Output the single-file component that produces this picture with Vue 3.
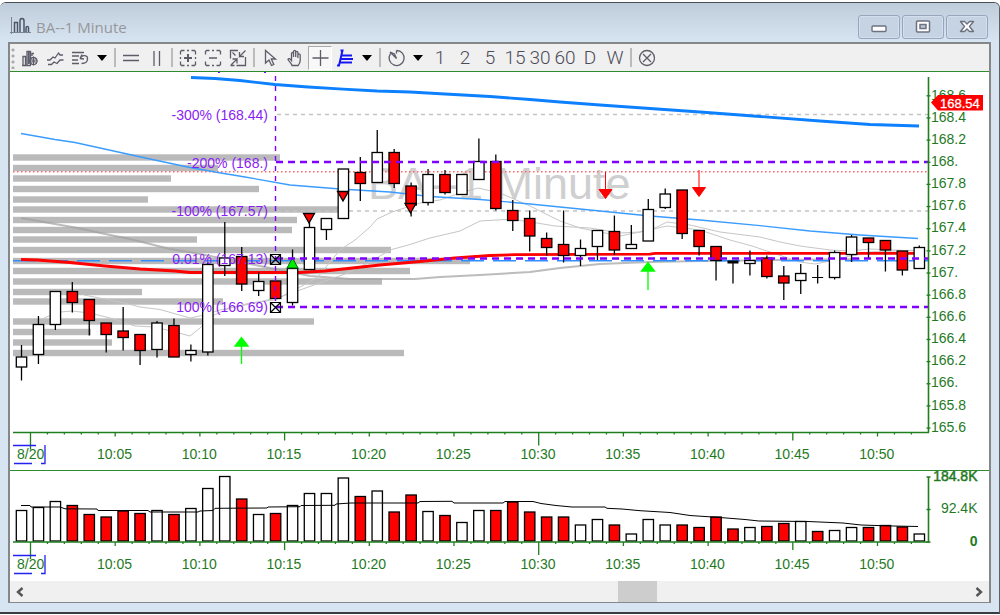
<script setup>
import { ref } from 'vue'

const STEP = 16.94
const cx = (i) => 21.5 + STEP * i

// body top, body bottom, high, low, falling
const candles = [
  [357, 367, 345, 380.5, 0], [324.5, 354.5, 316, 364, 0], [291.5, 324.5, 291.5, 330, 0], [291.5, 302.5, 282, 312.5, 1],
  [299.5, 320.5, 299.5, 335.5, 1], [323, 334.5, 323, 352.5, 1], [331, 337.5, 307, 350.5, 1], [334.5, 350.5, 334.5, 365, 1],
  [323, 349.5, 321, 357.5, 0], [325.5, 357, 318.5, 357, 1], [350.5, 354.5, 344.5, 361.5, 0], [264.5, 352, 262.5, 355.5, 0],
  [258, 265.5, 222, 276, 0], [256.5, 284, 247, 291, 1], [281.5, 290.5, 272.5, 296, 0], [281, 298.5, 281, 298.5, 1],
  [268.5, 302.5, 249.5, 305.5, 0], [227.5, 269.5, 222, 269.5, 0], [218.5, 229.5, 218.5, 240, 0], [169, 218.5, 169, 218.5, 0],
  [172.5, 183.5, 157, 201, 1], [152.5, 182.5, 130, 182.5, 0], [152.5, 183.5, 149, 188, 1], [186, 205, 182.5, 216.5, 1],
  [174.5, 202.5, 169, 205.5, 0], [174.5, 192.5, 170, 194.5, 1], [174.5, 194.5, 174.5, 194.5, 0], [161.5, 179.5, 138.5, 179.5, 0],
  [161.5, 208.5, 154.5, 210.5, 1], [210.5, 220.5, 200, 231, 1], [218.5, 236, 210.5, 251.5, 1], [238.5, 247.5, 232.5, 255.5, 1],
  [244.5, 255.5, 210.5, 262.5, 1], [248.5, 255.5, 239.5, 266, 0], [230.5, 246.5, 230.5, 260, 0], [231.5, 250, 215.5, 255, 1],
  [244.5, 248.5, 225, 248.5, 0], [209.5, 241, 199, 241, 0], [194, 207.5, 188.5, 209, 0], [190, 233.5, 190, 239, 1],
  [230.5, 246.5, 230.5, 255.5, 1], [246.5, 260.5, 246.5, 280.5, 1], [262, 262.5, 262, 283.5, 0], [260.5, 263.5, 250.5, 275.5, 0],
  [258, 276.5, 255.5, 278.5, 1], [276, 283, 266, 300, 1], [273.5, 280.5, 264, 294, 0], [277.5, 277.5, 265, 283.5, 0],
  [252.5, 277.5, 250.5, 279.5, 0], [237, 254.5, 235, 262, 0], [238, 242.5, 238, 258.5, 1], [240.5, 250, 240.5, 271.5, 1],
  [251, 270, 251, 275.5, 1], [247.5, 268.5, 245.5, 268.5, 0]
]

// bar top, falling
const volumes = [
  [510.5, 0], [507.5, 0], [501.5, 0], [505.5, 1], [514.5, 1], [517, 1], [511, 1], [513.5, 1], [510.5, 0], [514.5, 1], [508.5, 0],
  [488.5, 0], [476.5, 0], [499, 1], [514.5, 0], [513.5, 1], [505.5, 0], [493.5, 0], [493.5, 0], [478, 0], [496.5, 1],
  [491, 0], [512, 1], [495, 1], [511.5, 0], [515.5, 1], [522.5, 0], [510.5, 0], [510.5, 1], [502, 1], [512, 1],
  [517, 1], [517, 1], [525, 0], [519.5, 0], [525, 1], [534, 0], [519.5, 0], [525, 0], [525, 1], [527.5, 1],
  [517, 1], [529, 1], [527.5, 0], [526.5, 1], [523.5, 1], [521.5, 0], [531.5, 1], [530.5, 0], [527.5, 0], [527.5, 1],
  [525.5, 1], [527, 1], [534, 0]
]

// centre y, right end
const profile = [
  [157.5, 280], [168, 218], [178.5, 171], [189, 259], [199.5, 148], [209.5, 338], [220, 297], [230, 292], [239.5, 197],
  [250, 391], [261, 470], [271, 410], [281.5, 382], [292, 142], [301.5, 223], [321.5, 314], [332, 91], [342.5, 112], [353, 404]
]

const fibs = [
  ['-300% (168.44)', 119.5], ['-200% (168.)', 167.5], ['-100% (167.57)', 215.5], ['0.01% (167.13)', 263.5], ['100% (166.69)', 312]
]

const prices = ['168.6', '168.4', '168.2', '168.', '167.8', '167.6', '167.4', '167.2', '167.', '166.8', '166.6', '166.4', '166.2', '166.', '165.8', '165.6']
const priceY = (i) => 95.8 + 22.15 * i

const times = ['10:05', '10:10', '10:15', '10:20', '10:25', '10:30', '10:35', '10:40', '10:45', '10:50']
const ticks = Array.from({ length: 53 }, (_, i) => {
  const len = i === 0 ? 17 : i % 30 === 0 ? 13 : i % 15 === 0 ? 8 : i % 5 === 0 ? 4 : 2
  return { x: 30.5 + STEP * i, len }
})
const axes = { price: 432.5, volume: 542 }

const soldArrows = [[605.5, 172, 199], [699, 170, 197]]
const boughtArrows = [[241.5, 337, 364], [648, 262, 290]]
const downMarks = [[309, 213.5], [343, 191.5], [410.5, 203.5]]

const intervals = ['1', '2', '5', '15', '30', '60', 'D', 'W']
const scroll = ref(653)
</script>

<template>
  <main class="window">
    <header class="titlebar">
      <svg class="app-icon" width="21" height="18" viewBox="0 0 21 18" fill="none" stroke="#4d5566">
        <path d="M1.500 0v17M0 15.500h21" stroke="#7b8494" />
        <path d="M4.500 15V5.500h3V15M10 15V4q0-2.500 2-2.500T14 4v11M16 15v-4q0-1.500 1.300-1.500T18.500 11v4" stroke-width="1.500" />
      </svg>
      <h1>BA--1 Minute</h1>
      <div class="caption-buttons">
        <button type="button" aria-label="Minimize">
          <svg width="16" height="14" viewBox="0 0 16 14"><rect x="1" y="6" width="14" height="5.500" rx="1" fill="#fff" stroke="#6d7280" stroke-width="1.400" /></svg>
        </button>
        <button type="button" aria-label="Maximize">
          <svg width="16" height="14" viewBox="0 0 16 14"><rect x="1.500" y="1" width="13" height="11" rx="1" fill="#fff" stroke="#6d7280" stroke-width="1.500" /><rect x="5" y="4.500" width="6" height="4" fill="#b8c6d8" stroke="#6d7280" stroke-width="1.500" /></svg>
        </button>
        <button type="button" aria-label="Close">
          <svg width="16" height="14" viewBox="0 0 16 14"><path d="M1.500 1.500h4L8 4l2.500-2.500h4L10.500 6.500l4 5h-4L8 9l-2.500 2.500h-4l4-5z" fill="#fff" stroke="#6d7280" stroke-width="1.400" stroke-linejoin="round" /></svg>
        </button>
      </div>
    </header>

    <section class="client">
      <nav class="toolbar" aria-label="Chart tools">
        <span class="grip"></span>
        <button type="button" aria-label="Chart style">
          <svg viewBox="0 0 20 20"><path d="M3 17V8.500h2.500V17M7 17V3.500h3.500V17M12 8V5.500h2M2 17.500h9" /><path d="M8.800 4v12" stroke-width="2" /><circle cx="13.500" cy="13" r="3.500" /><path d="M13.500 8.500v9M9.500 13h8M10.500 10l6 6M16.500 10l-6 6" stroke-width="1" /></svg>
        </button>
        <button type="button" aria-label="Indicators">
          <svg viewBox="0 0 20 20"><path d="M2 12h3l3-3 2 1 3.500-5 1.500 2h3M3 16.500h3.500l2.500-2.500 3 1.500 3-3.500h3.500" /></svg>
        </button>
        <button type="button" aria-label="Studies">
          <svg viewBox="0 0 20 20"><path d="M2 4.500h12M2 8h7M2 12h6M2 15.500h7M10 10.500l2-4M10 10.500l4 .5M11 9.500c1-3 7-2.500 6.500 1.500 0 3.500-3 4.500-6 4.500" /></svg>
        </button>
        <button type="button" class="caret" aria-label="More studies"></button>
        <span class="sep"></span>
        <button type="button" aria-label="Horizontal line"><svg viewBox="0 0 20 20"><path d="M2 7.500h16M2 12.500h16" /></svg></button>
        <button type="button" aria-label="Vertical lines"><svg viewBox="0 0 20 20"><path d="M8 3v15M13.500 3v15" /></svg></button>
        <span class="sep"></span>
        <button type="button" aria-label="Expand">
          <svg viewBox="0 0 20 20"><path d="M6.500 2.500h-3l-1 1v3M13.500 2.500h3l1 1v3M6.500 17.500h-3l-1-1v-3M13.500 17.500h3l1-1v-3M9 2.500h2M9 17.500h2M2.500 9v2M17.500 9v2" /><path d="M10 6v8M6 10h8" stroke-width="2" /></svg>
        </button>
        <button type="button" aria-label="Shrink">
          <svg viewBox="0 0 20 20"><path d="M6.500 2.500h-3l-1 1v3M13.500 2.500h3l1 1v3M6.500 17.500h-3l-1-1v-3M13.500 17.500h3l1-1v-3M9 2.500h2M9 17.500h2M6 10h8" /></svg>
        </button>
        <button type="button" aria-label="Fit">
          <svg viewBox="0 0 20 20"><path d="M10 2.500H2.500v8M17.500 9v8.500H8.500M2.500 17.500h4M17.500 2.500l-6 6V4M11.500 8.500h4.500M3 17l6-6v4.500M9 11H4.500M4.500 4.500l3 3" /></svg>
        </button>
        <span class="sep"></span>
        <button type="button" aria-label="Pointer"><svg viewBox="0 0 20 20"><path d="M5.500 2.500v12.500l3.500-3 2.500 5.500 2.300-1-2.500-5.500h4.200z" /></svg></button>
        <button type="button" aria-label="Pan">
          <svg viewBox="0 0 20 20"><path d="M7 17.500c-1-2.500-3-4-4-6 .5-1.500 2-1 3.500 1V5.500c.3-1.500 1.700-1.500 2 0V9 3.500c.3-1.500 1.900-1.500 2.200 0V9 4.500c.3-1.500 1.900-1.500 2.200 0V10 7c.3-1.500 2-1.500 2.300 0v5.500c0 2-1 3.500-2 5z" /></svg>
        </button>
        <button type="button" class="pressed" aria-label="Crosshair" aria-pressed="true"><svg viewBox="0 0 20 20"><path d="M10.500 2v16M2.500 10h16" /></svg></button>
        <button type="button" aria-label="Fibonacci retracement">
          <svg class="blue" viewBox="0 0 20 20"><path d="M2 17.500h2L7.500 2.500h-2M6 7.500h11M5 11h13M4 14.500h13" /></svg>
        </button>
        <button type="button" class="caret" aria-label="More drawing tools"></button>
        <span class="sep"></span>
        <button type="button" aria-label="Time interval">
          <svg viewBox="0 0 20 20"><path d="M10.500 2.500a7.500 7.500 0 1 1-6 3.200M10.500 2.500v3M4 4l6.500 6.500L8.500 6z" /></svg>
        </button>
        <button type="button" class="caret" aria-label="More intervals"></button>
        <button v-for="n in intervals" :key="n" type="button" class="interval">{{ n }}</button>
        <span class="sep"></span>
        <button type="button" aria-label="Cancel"><svg viewBox="0 0 20 20"><circle cx="10" cy="10" r="7.500" /><path d="M6 6l8 8M14 6l-8 8" /></svg></button>
      </nav>

      <svg class="chart" viewBox="10 72 979 398" role="img" aria-label="Price chart">
        <text class="watermark" x="368" y="198.500">BA--1 Minute</text>

        <rect v-for="p in profile" :key="p[0]" class="profile" x="13" :y="p[0] - 3.200" :width="p[1] - 13" height="6.400" />

        <g class="average">
          <polyline class="wide" points="21,218 55,224 75,227.500 110,235 130,239 150,244 170,249 195,253 240,262 270,268 310,276 350,279 415,279 440,277 480,275 530,272 560,268 600,264 650,262 700,261 860,259" />
          <polyline points="84,295 125,303 140,307 160,309.500 190,318 200,316 220,310 250,304 280,297 300,290 325,281 345,274 370,262 390,250 410,244.500 430,238 460,231 480,221 505,219.500 525,221 555,226 590,228 620,233 640,232 655,228 667,222 690,225 720,232 760,237 780,242 800,246 830,250 850,251 870,249 918,251" />
          <polyline points="44,318 60,312 72,311 90,313 110,318 135,326 155,327 175,332 190,336 200,328 212,316 230,308 250,303 275,300 300,287 318,277 330,262 340,250 355,240 370,227 377,219 392,212 420,203 440,200 460,193 478,188 500,193 530,206 560,221 580,228 620,236 640,232 667,226 700,230 730,240 752,246 770,252 800,262 815,264 830,261 850,256 870,252 918,250" />
        </g>
        <path class="grid-dash" d="M277 114.500H928M277 211H928" />
        <path class="last-dots" d="M13 171.700H928" />
        <polyline class="ma-blue thick" points="191,77.500 215,78.500 240,80.500 275,84.500 308,87 343,89.200 377,91 410,92 445,94 490,96.500 530,99.500 560,102 600,105 650,108.500 700,112 760,116.500 820,121 870,124.500 919,126" />
        <polyline class="ma-blue" points="21,133.500 55,139.500 75,142.500 100,148 125,153.500 150,159 190,167.500 215,172 245,177 290,185 340,189 390,192 430,196.500 480,199.500 530,204 590,210 650,216 700,220 760,225.700 810,231 860,235 918,238.500" />
        <path class="level-blue" d="M13 260.700H928" />
        <polyline class="ma-red" points="21,259.500 37,260 70,262.500 105,266 140,269 175,271 190,272.500 300,272.500 325,271 380,265 420,261.500 455,258 490,255.500 515,254.700 650,254.200 655,253.300 918,253.300" />

        <g v-for="(c, i) in candles" :key="i" :class="c[4] ? 'down' : 'up'">
          <path :d="`M${cx(i)} ${c[2]}V${c[3]}`" />
          <path v-if="c[1] - c[0] < 1" :d="`M${cx(i) - 5.500} ${c[0]}h11`" :stroke-width="c[0] === c[1] ? 1 : 3" />
          <rect v-else :x="cx(i) - 5.200" :y="c[0]" width="10.400" :height="c[1] - c[0]" />
        </g>

        <text v-for="f in fibs" :key="f[0]" class="fib" x="268" :y="f[1]">{{ f[0] }}</text>

        <g class="down">
          <path v-for="m in downMarks" :key="m[0]" :d="`M${m[0] - 5.500} ${m[1]}h11l-5.500 9.500z`" />
        </g>
        <path d="M287 268h11l-5.500-10z" fill="#0e0" stroke="#060" />
        <g fill="#f00" stroke="#f00">
          <path v-for="a in soldArrows" :key="a[0]" :d="`M${a[0]} ${a[1]}v17M${a[0] - 6.500} ${a[2] - 9.500}h13l-6.500 9z`" />
        </g>
        <g fill="#0f0" stroke="#0f0" stroke-width="1.300">
          <path v-for="a in boughtArrows" :key="a[0]" :d="`M${a[0]} ${a[2]}v-19M${a[0] - 6.500} ${a[1] + 9}h13l-6.500-8.500z`" />
        </g>

        <path class="fib-lines" d="M276 162H928M276 258.500H928M276 307H928" />
        <path class="fib-axis" d="M275.500 76V307" />
        <path d="M218 72.500h2M264 72.500h2" stroke="#8000ff" />
        <path class="handles" d="M270.500 254.500h10v10h-10zl10 10m0-10l-10 10M270.500 302.500h10v10h-10zl10 10m0-10l-10 10" />

        <g class="axis">
          <path d="M928.500 77V432.500M13 432.500H929" stroke-width="1.600" />
          <path v-for="(p, i) in prices" :key="p" :d="`M926.500 ${priceY(i)}h4`" />
          <path v-for="t in ticks" :key="t.x" :d="`M${t.x} ${axes.price}v${t.len}`" />
        </g>
        <text v-for="(p, i) in prices" :key="p" class="label" x="931" :y="priceY(i) + 3.700">{{ p }}</text>
        <path d="M931 102.500l7-7.500h45v15.500h-45z" fill="#f00" />
        <text class="tag" x="940" y="107.500">168.54</text>

        <path class="session" d="M13 445.500H36M14 463.500H32M41 463.500H45V445" />
        <text class="label" x="17" y="459">8/20</text>
        <text v-for="(t, i) in times" :key="t" class="label mid" :x="114.500 + 84.700 * i" y="459">{{ t }}</text>
      </svg>

      <svg class="chart volume" viewBox="10 471 979 110" role="img" aria-label="Volume chart">
        <g v-for="(v, i) in volumes" :key="i" :class="v[1] ? 'down' : 'up'">
          <rect :x="cx(i) - 5.200" :y="v[0]" width="10.400" :height="541 - v[0]" />
        </g>
        <polyline class="volume-average" points="21,505.500 30,505.500 31,507 60,507 65,508.800 97,509 98,510.500 148,510.500 150,512 198,512 200,511 213,510.500 215,508.300 267,508 268,507 300,506.700 301,505.500 335,505.300 336,504 351,503 418,503 420,501.500 452,501.300 454,503 503,503 505,501.500 533,501.500 541,503.500 556,505.500 572,507 605,507 607,508.300 622,509 640,510.700 662,512 670,512.500 690,515.500 720,517.500 745,519.500 759,521 808,521.500 843,523 861,525 893,526 918,526.500" />
        <g class="axis">
          <path d="M928.500 477V542M13 542H929" stroke-width="1.600" />
          <path d="M926.500 477h4M926.500 509.500h4M926.500 542h4" />
          <path v-for="t in ticks" :key="t.x" :d="`M${t.x} ${axes.volume}v${t.len}`" />
        </g>
        <text class="label end strong" x="977.500" y="481">184.8K</text>
        <text class="label end" x="977.500" y="513">92.4K</text>
        <text class="label end bold" x="977.500" y="545.500">0</text>
        <path class="session" d="M13 555.500H36M14 573.500H32M41 573.500H45V555" />
        <text class="label" x="17" y="569">8/20</text>
        <text v-for="(t, i) in times" :key="t" class="label mid" :x="114.500 + 84.700 * i" y="569">{{ t }}</text>
      </svg>

      <footer class="scrollbar">
        <button type="button" aria-label="Scroll left"><svg width="10" height="10" viewBox="0 0 10 10"><path d="M7.500 1L3 5l4.500 4" /></svg></button>
        <input v-model="scroll" type="range" min="0" max="1000" aria-label="Scroll chart" />
        <button type="button" aria-label="Scroll right"><svg width="10" height="10" viewBox="0 0 10 10"><path d="M2.500 1L7 5 2.500 9" /></svg></button>
      </footer>
    </section>
  </main>
</template>

<style>
body {
  background: linear-gradient(#fff 50%, #888 50%);
}
</style>

<style scoped>
.window {
  box-sizing: border-box;
  margin-top: 2px;
  padding: 0 8px 9px;
  background: #d7e4f2;
  border-top: 1px solid #4a4f55;
  border-right: 1px solid #5a6068;
  border-bottom: 2px solid #3a3c40;
  border-radius: 6px 6px 0 0;
  font-family: "Liberation Sans", Arial, sans-serif;
}

button {
  padding: 0;
  border: 0;
  background: none;
  color: inherit;
  font: inherit;
}

.titlebar {
  display: flex;
  align-items: center;
  height: 39px;
  margin: 0 -8px;
  padding: 0 11px 0 10px;
  border-radius: 6px 6px 0 0;
  background: linear-gradient(#bfcddb, #d7e5f3);
}

.app-icon {
  margin-top: 6px;
}

h1 {
  margin: 9px 0 0 5px;
  color: #97979a;
  font: 15px/20px "Open Sans", "Noto Sans", sans-serif;
}

.caption-buttons {
  display: flex;
  gap: 2px;
  margin: 8px 0 0 auto;
}

.caption-buttons button {
  display: flex;
  align-items: center;
  justify-content: center;
  box-sizing: border-box;
  width: 42px;
  height: 24px;
  border: 1px solid #97a5bf;
  border-radius: 3px;
  background: #c5d3e2;
  box-shadow: inset 0 0 0 1px #d3dfec;
}

.client {
  border: 2px solid #868789;
  border-bottom-width: 1px;
  background: #fff;
}

.toolbar {
  display: flex;
  align-items: center;
  gap: 1px;
  height: 27px;
  border-bottom: 1px solid #2e8b2e;
  background: #f0f0f0;
  color: #62626e;
}

.toolbar button {
  display: flex;
  align-items: center;
  justify-content: center;
  flex: none;
  box-sizing: border-box;
  width: 24px;
  height: 24px;
}

.toolbar svg {
  width: 20px;
  height: 20px;
  fill: none;
  stroke: #5d5d6a;
  stroke-width: 1.3;
}

.toolbar svg.blue {
  stroke: #1616f4;
  stroke-width: 2;
}

.toolbar .pressed {
  border: 1px solid;
  border-color: #aaa #fff #fff #aaa;
  background: #f8f8f8;
}

.toolbar .caret {
  width: 18px;
}

.caret::after {
  content: "";
  border: 5px solid transparent;
  border-top: 6px solid #000;
  border-bottom: 0;
}

.toolbar .interval {
  color: #4c4c58;
  font: 300 19px/24px Roboto, "Liberation Sans", sans-serif;
}

.grip {
  width: 7px;
  height: 22px;
  background: radial-gradient(circle at 3px 3px, #aaa 1px, transparent 2px) 0 0 / 7px 6px;
}

.sep {
  width: 6px;
  height: 19px;
  background: linear-gradient(90deg, transparent 2px, #bbb 2px, #bbb 4px, transparent 4px);
}

.chart {
  display: block;
  width: 100%;
}

.volume {
  border-top: 1px solid #2e8b2e;
}

.watermark {
  fill: #cfcfd0;
  font-size: 45px;
}

.profile {
  fill: #bababa;
}

.average {
  fill: none;
  stroke: #c6c6c6;
  stroke-width: 1;
}

.average .wide {
  stroke: #a0a0a0;
  stroke-width: 2;
  stroke-opacity: 0.7;
}

.grid-dash {
  stroke: #c4c4c4;
  stroke-width: 1.4;
  stroke-dasharray: 4 4;
}

.last-dots {
  stroke: #f66;
  stroke-width: 1.5;
  stroke-dasharray: 1.5 2.5;
}

.ma-blue {
  fill: none;
  stroke: #3a9cff;
  stroke-width: 1.3;
}

.ma-blue.thick {
  stroke: #0d80ff;
  stroke-width: 2.8;
}

.level-blue {
  stroke: #2f8fff;
  stroke-width: 1.4;
  stroke-dasharray: 23 9;
}

.ma-red {
  fill: none;
  stroke: #f00;
  stroke-width: 2.8;
}

.fib {
  fill: #8a1cf5;
  font-size: 14px;
  text-anchor: end;
}

.up,
.down {
  fill: #fff;
  stroke: #000;
  stroke-width: 1.3;
}

.down {
  fill: #f00;
}

.fib-lines {
  stroke: #8000ff;
  stroke-width: 2.6;
  stroke-dasharray: 7 5;
}

.fib-axis {
  stroke: #8000ff;
  stroke-width: 1.4;
  stroke-dasharray: 5 5;
}

.handles {
  fill: none;
  stroke: #000;
  stroke-width: 1.2;
}

.axis {
  stroke: #1f7f1f;
  stroke-width: 1.3;
}

.label {
  fill: #1f7a1f;
  font-size: 14px;
}

.mid {
  text-anchor: middle;
}

.end {
  text-anchor: end;
}

.strong {
  stroke: #1f7a1f;
  stroke-width: 0.5;
}

.bold {
  font-weight: bold;
}

.tag {
  fill: #fff;
  stroke: #fff;
  stroke-width: 0.3;
  font-size: 13px;
}

.session {
  fill: none;
  stroke: #2222f0;
  stroke-width: 1.3;
}

.volume-average {
  fill: none;
  stroke: #000;
}

.scrollbar {
  display: flex;
  height: 21px;
  background: #f0f0f0;
}

.scrollbar button {
  width: 20px;
  display: flex;
  align-items: center;
  justify-content: center;
}

.scrollbar svg {
  fill: none;
  stroke: #555;
  stroke-width: 2.4;
}

.scrollbar input {
  flex: 1;
  min-width: 0;
  height: 21px;
  margin: 0;
  appearance: none;
  background: none;
}

.scrollbar input::-webkit-slider-thumb {
  appearance: none;
  width: 39px;
  height: 21px;
  border-radius: 0;
  background: #cdcdcd;
}
</style>
